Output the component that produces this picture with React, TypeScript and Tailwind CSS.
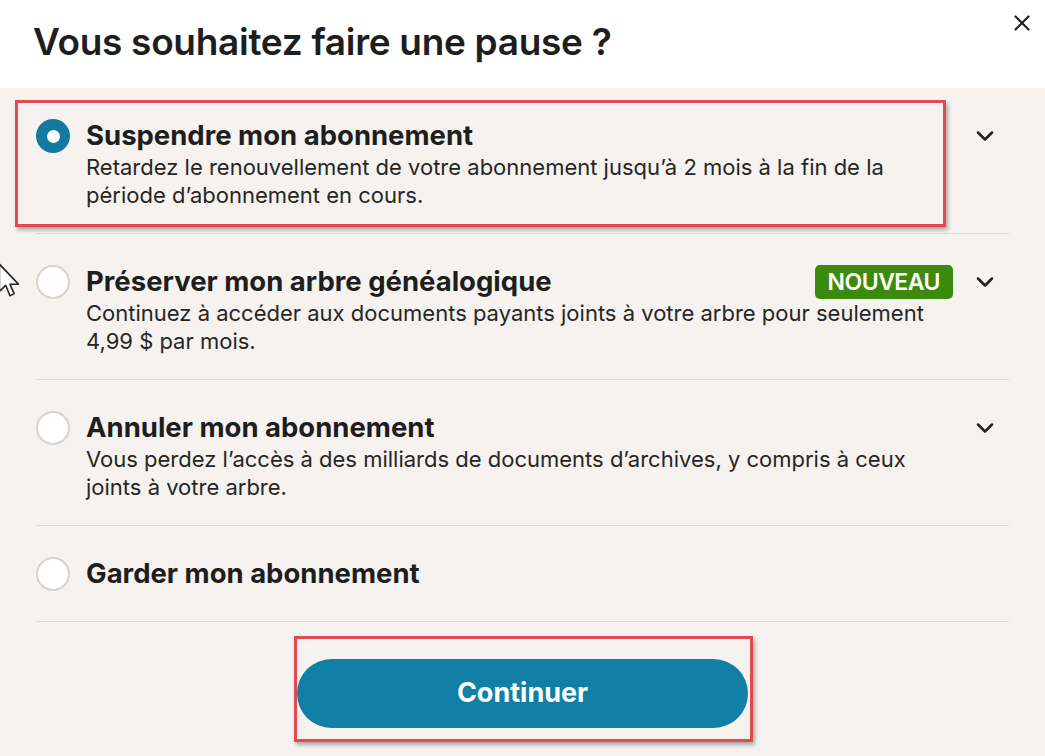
import { FiChevronDown, FiX } from "react-icons/fi";

const options = [
  {
    id: "pause",
    title: "Suspendre mon abonnement",
    text: "Retardez le renouvellement de votre abonnement jusqu’à 2 mois à la fin de la période d’abonnement en cours.",
    selected: true,
    chevron: true,
  },
  {
    id: "tree",
    title: "Préserver mon arbre généalogique",
    text: "Continuez à accéder aux documents payants joints à votre arbre pour seulement 4,99 $ par mois.",
    badge: "NOUVEAU",
    chevron: true,
  },
  {
    id: "cancel",
    title: "Annuler mon abonnement",
    text: "Vous perdez l’accès à des milliards de documents d’archives, y compris à ceux joints à votre arbre.",
    chevron: true,
  },
  {
    id: "keep",
    title: "Garder mon abonnement",
  },
];

const Cursor = () => (
  <svg
    className="absolute left-[-3px] top-[262px]"
    width="28"
    height="38"
    viewBox="0 0 26 36"
  >
    <path
      d="M2 2 L2 28 L8 22 L12 32 L16 30 L12 21 L20 21 Z"
      fill="#fff"
      stroke="#222"
      strokeWidth="1.5"
      strokeLinejoin="round"
    />
  </svg>
);

export default function App() {
  return (
    <div className="relative w-[1045px] h-[756px] overflow-hidden bg-[#f5f2ef] font-['Inter',sans-serif] text-[#1e1e1e]">
      {/* Header */}
      <div className="relative h-[88px] bg-white pl-[33px] pt-[20px]">
        <h1 className="text-[37px] leading-[44px] font-semibold tracking-[-0.3px]">
          Vous souhaitez faire une pause ?
        </h1>
        <FiX className="absolute right-[10px] top-[10px] w-[26px] h-[26px] text-[#222]" strokeWidth={2} />
      </div>

      {/* Options */}
      <div className="px-[36px]">
        {options.map((opt) => (
          <div
            key={opt.id}
            className={`flex border-b border-[#dedad6] pt-[31px] ${opt.text ? "pb-[24px]" : "pb-[30px]"}`}
          >
            <div className="w-[50px] shrink-0">
              {opt.selected ? (
                <div className="w-[34px] h-[34px] rounded-full bg-[#13799f] flex items-center justify-center">
                  <div className="w-[13px] h-[13px] rounded-full bg-white" />
                </div>
              ) : (
                <div className="w-[34px] h-[34px] rounded-full bg-white border-2 border-[#d6d3d0]" />
              )}
            </div>
            <div className="flex-1">
              <div className="flex items-center h-[34px]">
                <span className="text-[27.5px] font-bold flex-1">{opt.title}</span>
                {opt.badge && (
                  <span className="mr-[18px] h-[34px] px-[13px] rounded-[5px] bg-[#3b8a0c] text-white text-[23px] font-semibold leading-[34px] tracking-[-0.5px]">
                    {opt.badge}
                  </span>
                )}
                {opt.chevron && (
                  <FiChevronDown className="w-[28px] h-[28px] mr-[10px] text-[#222]" strokeWidth={2.2} />
                )}
              </div>
              {opt.text && (
                <p className="text-[22px] leading-[28px] text-[#262626] max-w-[860px]">
                  {opt.text}
                </p>
              )}
            </div>
          </div>
        ))}
      </div>

      {/* Button */}
      <div className="flex justify-center pt-[37px]">
        <button className="w-[451px] h-[69px] rounded-full bg-[#127fa6] text-white text-[27px] font-bold">
          Continuer
        </button>
      </div>

      {/* Annotation boxes */}
      <div className="absolute left-[15px] top-[100px] w-[931px] h-[127px] border-[3px] border-[#e24a4f] shadow-[2px_3px_4px_rgba(0,0,0,0.3)]" />
      <div className="absolute left-[294px] top-[636px] w-[459px] h-[106px] border-[3px] border-[#e24a4f] shadow-[2px_3px_4px_rgba(0,0,0,0.3)]" />

      <Cursor />
    </div>
  );
}
